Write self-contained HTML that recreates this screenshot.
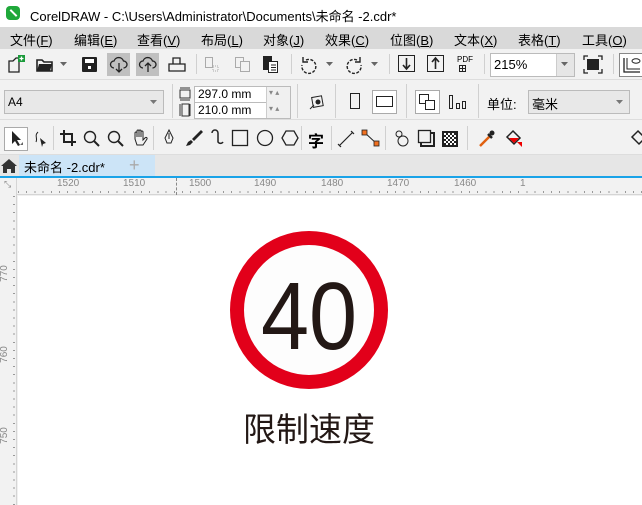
<!DOCTYPE html>
<html><head><meta charset="utf-8"><style>
*{margin:0;padding:0;box-sizing:border-box}
body{width:642px;height:505px;overflow:hidden;background:#f0f0f0;font-family:"Liberation Sans","Noto Sans CJK SC",sans-serif;position:relative;color:#000}
.a{position:absolute}
.menu span{position:absolute;top:3px;font-size:13px}
svg{position:absolute;overflow:visible}
.sep{position:absolute;width:1px;background:#d0d0d0}
.rl{position:absolute;font-size:10px;color:#888}
</style></head><body>
<div class="a" style="left:0;top:0;width:642px;height:27px;background:#fff"></div>
<div class="a" style="left:6px;top:6px;width:14px;height:14px;border-radius:4px;background:#1fa83a"></div>
<div class="a" style="left:9px;top:12px;width:9px;height:2px;background:#fff;transform:rotate(45deg)"></div>
<div class="a" style="left:30px;top:6px;font-size:13px">CorelDRAW - C:\Users\Administrator\Documents\未命名 -2.cdr*</div>
<div class="a menu" style="left:0;top:27px;width:642px;height:22px;background:#d9d9d9">
<span style="left:10px">文件(<u>F</u>)</span><span style="left:74px">编辑(<u>E</u>)</span><span style="left:137px">查看(<u>V</u>)</span><span style="left:201px">布局(<u>L</u>)</span><span style="left:263px">对象(<u>J</u>)</span><span style="left:325px">效果(<u>C</u>)</span><span style="left:390px">位图(<u>B</u>)</span><span style="left:454px">文本(<u>X</u>)</span><span style="left:518px">表格(<u>T</u>)</span><span style="left:582px">工具(<u>O</u>)</span></div>
<div class="a" style="left:0;top:49px;width:642px;height:31px;background:#f2f2f2;border-bottom:1px solid #ddd"></div>
<svg style="left:7px;top:55px" width="20" height="20"><path d="M2 6h4l3-3h3v14H2z" fill="none" stroke="#222" stroke-width="1.3"/><rect x="11" y="0" width="7" height="7" fill="#1a9a3a"/><path d="M14.5 1.5v4M12.5 3.5h4" stroke="#fff" stroke-width="1.3"/></svg>
<svg style="left:36px;top:57px" width="20" height="16"><path d="M1 3h5l2 2h8v9H1z" fill="none" stroke="#222" stroke-width="1.6"/><path d="M3 7h13l-2 7H1z" fill="#222"/></svg>
<svg style="left:60px;top:62px" width="8" height="5"><path d="M0 0h7l-3.5 4z" fill="#666"/></svg>
<svg style="left:82px;top:57px" width="16" height="16"><rect x="0" y="0" width="15" height="15" rx="1" fill="#222"/><rect x="3" y="2" width="9" height="4" fill="#fff"/><rect x="6" y="9" width="3" height="3" fill="#fff"/></svg>
<div class="a" style="left:107px;top:53px;width:23px;height:23px;background:#c0c0c0"></div>
<div class="a" style="left:136px;top:53px;width:23px;height:23px;background:#c0c0c0"></div>
<svg style="left:110px;top:56px" width="18" height="18"><path d="M4 12a3.5 3.5 0 0 1 0-7 5 5 0 0 1 9.5 0 3.5 3.5 0 0 1 0 7" fill="none" stroke="#222" stroke-width="1.3"/><path d="M9 7v9M6 13l3 3 3-3" fill="none" stroke="#222" stroke-width="1.3"/></svg>
<svg style="left:139px;top:56px" width="18" height="18"><path d="M4 12a3.5 3.5 0 0 1 0-7 5 5 0 0 1 9.5 0 3.5 3.5 0 0 1 0 7" fill="none" stroke="#222" stroke-width="1.3"/><path d="M9 16V7M6 10l3-3 3 3" fill="none" stroke="#222" stroke-width="1.3"/></svg>
<svg style="left:168px;top:56px" width="18" height="18"><path d="M5 8V2h7v6M1 8h16v7H1z" fill="none" stroke="#222" stroke-width="1.3"/></svg>
<div class="sep" style="left:196px;top:54px;height:20px"></div>
<svg style="left:205px;top:57px" width="14" height="16"><rect x="0.5" y="0.5" width="7" height="10" fill="none" stroke="#aaa"/><rect x="8" y="9" width="5" height="5" fill="none" stroke="#aaa" stroke-dasharray="1 1"/></svg>
<svg style="left:235px;top:57px" width="16" height="16"><rect x="0.5" y="0.5" width="8" height="10" fill="none" stroke="#aaa"/><rect x="5.5" y="4.5" width="9" height="10" fill="#f2f2f2" stroke="#aaa"/></svg>
<svg style="left:263px;top:56px" width="16" height="18"><rect x="0" y="0" width="9" height="14" fill="#222"/><rect x="5.5" y="5.5" width="9" height="11" fill="#fff" stroke="#222"/><path d="M8 9h5M8 11.5h5M8 14h5" stroke="#222"/></svg>
<div class="sep" style="left:291px;top:54px;height:20px"></div>
<svg style="left:300px;top:57px" width="18" height="17"><path d="M6 3a7 7 0 1 1-4 5" fill="none" stroke="#222" stroke-width="1.4" stroke-dasharray="3 1.5"/><path d="M3 0v5h5" fill="none" stroke="#222" stroke-width="1.4"/></svg>
<svg style="left:326px;top:62px" width="8" height="5"><path d="M0 0h7l-3.5 4z" fill="#666"/></svg>
<svg style="left:345px;top:57px" width="18" height="17"><path d="M12 3a7 7 0 1 0 4 5" fill="none" stroke="#222" stroke-width="1.4" stroke-dasharray="3 1.5"/><path d="M15 0v5h-5" fill="none" stroke="#222" stroke-width="1.4"/></svg>
<svg style="left:371px;top:62px" width="8" height="5"><path d="M0 0h7l-3.5 4z" fill="#666"/></svg>
<div class="sep" style="left:389px;top:54px;height:20px"></div>
<svg style="left:398px;top:55px" width="18" height="18"><rect x="0.5" y="0.5" width="16" height="16" fill="none" stroke="#222"/><path d="M8.5 3v10M5 10l3.5 4 3.5-4" fill="none" stroke="#222" stroke-width="1.6"/></svg>
<svg style="left:427px;top:55px" width="18" height="18"><rect x="0.5" y="0.5" width="16" height="16" fill="none" stroke="#222"/><path d="M8.5 14V4M5 7l3.5-4 3.5 4" fill="none" stroke="#222" stroke-width="1.6"/></svg>
<div class="a" style="left:457px;top:55px;font-size:8px">PDF</div>
<svg style="left:459px;top:65px" width="8" height="8"><rect x="0.5" y="0.5" width="6" height="6" fill="none" stroke="#222"/><path d="M3.5 0v7M0 3.5h7" stroke="#222"/></svg>
<div class="sep" style="left:484px;top:54px;height:20px"></div>
<div class="a" style="left:490px;top:53px;width:85px;height:24px;background:#fff;border:1px solid #bbb"></div>
<div class="a" style="left:494px;top:57px;font-size:13px">215%</div>
<div class="a" style="left:556px;top:54px;width:18px;height:22px;background:#e6e6e6;border-left:1px solid #ccc"></div>
<svg style="left:561px;top:62px" width="8" height="5"><path d="M0 0h7l-3.5 4z" fill="#666"/></svg>
<svg style="left:584px;top:56px" width="18" height="17"><path d="M0 4V0h4M14 0h4v4M18 13v4h-4M4 17H0v-4" fill="none" stroke="#222" stroke-width="1.3"/><rect x="3" y="3" width="12" height="11" fill="#222"/></svg>
<div class="sep" style="left:613px;top:54px;height:20px"></div>
<div class="a" style="left:619px;top:53px;width:24px;height:24px;border:1px solid #888;background:#fff"></div>
<svg style="left:623px;top:57px" width="18" height="16"><path d="M1 1v14h16" fill="none" stroke="#222" stroke-width="1.3"/><path d="M4 1v11h13" fill="none" stroke="#222"/><ellipse cx="13" cy="4" rx="4" ry="2.2" fill="none" stroke="#222"/></svg>
<div class="a" style="left:0;top:80px;width:642px;height:40px;background:#f2f2f2;border-bottom:1px solid #ddd"></div>
<div class="a" style="left:4px;top:90px;width:160px;height:24px;background:#e8e8e8;border:1px solid #bbb"></div>
<div class="a" style="left:8px;top:95px;font-size:12px">A4</div>
<svg style="left:150px;top:100px" width="8" height="5"><path d="M0 0h7l-3.5 4z" fill="#777"/></svg>
<div class="sep" style="left:172px;top:84px;height:34px"></div>
<svg style="left:179px;top:87px" width="12" height="30"><path d="M1 1h10M1 13h10M1 3h10v8H1z" fill="none" stroke="#333"/><path d="M1 17v12M11 17v12M3 17h7v12H3z" fill="none" stroke="#333"/></svg>
<div class="a" style="left:194px;top:86px;width:97px;height:17px;background:#fff;border:1px solid #bbb"></div>
<div class="a" style="left:194px;top:102px;width:97px;height:17px;background:#fff;border:1px solid #bbb"></div>
<div class="a" style="left:198px;top:87px;font-size:12px">297.0 mm</div>
<div class="a" style="left:198px;top:103px;font-size:12px">210.0 mm</div>
<div class="a" style="left:266px;top:87px;width:24px;height:31px;background:#f0f0f0;border-left:1px solid #ccc"></div>
<div class="a" style="left:269px;top:88px;font-size:8px;color:#888">▾ ▴</div>
<div class="a" style="left:269px;top:104px;font-size:8px;color:#888">▾ ▴</div>
<div class="sep" style="left:297px;top:84px;height:34px"></div>
<svg style="left:309px;top:93px" width="18" height="18"><rect x="3.5" y="3.5" width="10" height="10" fill="none" stroke="#222" transform="rotate(-10 9 9)"/><circle cx="9" cy="9" r="2.5" fill="#222"/><path d="M1 16l4-4" stroke="#222"/></svg>
<div class="sep" style="left:335px;top:84px;height:34px"></div>
<svg style="left:350px;top:93px" width="10" height="17"><rect x="0.5" y="0.5" width="9" height="15" fill="none" stroke="#222"/></svg>
<div class="a" style="left:372px;top:90px;width:25px;height:24px;border:1px solid #aaa;background:#fff"></div>
<svg style="left:376px;top:96px" width="18" height="12"><rect x="0.5" y="0.5" width="16" height="10" fill="none" stroke="#222"/></svg>
<div class="sep" style="left:406px;top:84px;height:34px"></div>
<div class="a" style="left:415px;top:90px;width:25px;height:24px;border:1px solid #aaa;background:#fff"></div>
<svg style="left:419px;top:94px" width="18" height="16"><rect x="0.5" y="0.5" width="9" height="9" fill="none" stroke="#222"/><rect x="6.5" y="6.5" width="9" height="9" fill="#fff" stroke="#222"/></svg>
<svg style="left:449px;top:95px" width="18" height="14"><rect x="0.5" y="0.5" width="3" height="13" fill="none" stroke="#222"/><rect x="7.5" y="8.5" width="3" height="5" fill="none" stroke="#222"/><rect x="13.5" y="6.5" width="3" height="7" fill="none" stroke="#222"/></svg>
<div class="sep" style="left:478px;top:84px;height:34px"></div>
<div class="a" style="left:487px;top:94px;font-size:13px">单位:</div>
<div class="a" style="left:528px;top:90px;width:102px;height:24px;background:#e8e8e8;border:1px solid #bbb"></div>
<div class="a" style="left:532px;top:94px;font-size:13px">毫米</div>
<svg style="left:616px;top:100px" width="8" height="5"><path d="M0 0h7l-3.5 4z" fill="#777"/></svg>
<div class="a" style="left:0;top:120px;width:642px;height:35px;background:#f2f2f2;border-bottom:1px solid #ddd"></div>
<div class="a" style="left:4px;top:127px;width:24px;height:24px;border:1px solid #aaa;background:#fff"></div>
<svg style="left:10px;top:130px" width="14" height="18"><path d="M2 1v13l3-3 3 5 2-1-3-5h4z" fill="#222"/><path d="M10 15l3 0 0-3z" fill="#666"/></svg>
<svg style="left:33px;top:130px" width="16" height="18"><path d="M5 2c-4 4 0 6-2 10" fill="none" stroke="#222"/><path d="M7 8l6 5-3 1 -1 3z" fill="#222"/></svg>
<div class="sep" style="left:53px;top:126px;height:24px"></div>
<svg style="left:60px;top:130px" width="16" height="18"><path d="M4 0v12h12M0 4h12v12" fill="none" stroke="#222" stroke-width="2"/></svg>
<svg style="left:83px;top:130px" width="18" height="18"><circle cx="7" cy="7" r="5.5" fill="none" stroke="#222" stroke-width="1.4"/><path d="M11 11l5 5" stroke="#222" stroke-width="2"/></svg>
<svg style="left:107px;top:130px" width="18" height="18"><circle cx="7" cy="7" r="5.5" fill="none" stroke="#222" stroke-width="1.4"/><path d="M11 11l5 5" stroke="#222" stroke-width="2"/></svg>
<svg style="left:131px;top:129px" width="18" height="18"><path d="M4 10V4a1 1 0 0 1 2 0v4V2a1 1 0 0 1 2 0v6V2a1 1 0 0 1 2 0v6V3a1 1 0 0 1 2 0v8l2-2a1 1 0 0 1 2 1l-4 6H6z" fill="none" stroke="#222"/></svg>
<div class="sep" style="left:153px;top:126px;height:24px"></div>
<svg style="left:163px;top:129px" width="12" height="18"><path d="M6 1l4 8-2 5H4l-2-5z" fill="none" stroke="#222"/><path d="M6 4v6" stroke="#222"/></svg>
<svg style="left:185px;top:129px" width="18" height="18"><path d="M16 1L7 10l2 2 9-9zM6 11l-3 2-2 4 4-1 3-3z" fill="#222"/></svg>
<svg style="left:208px;top:129px" width="16" height="18"><path d="M4 4a3 3 0 0 1 6 0v9a3 3 0 0 0 5 0" fill="none" stroke="#222" stroke-width="1.5"/></svg>
<svg style="left:232px;top:130px" width="18" height="18"><rect x="0.5" y="0.5" width="15" height="15" fill="none" stroke="#222" stroke-width="1.3"/></svg>
<svg style="left:257px;top:130px" width="18" height="18"><circle cx="8" cy="8" r="7.5" fill="none" stroke="#222" stroke-width="1.3"/></svg>
<svg style="left:282px;top:130px" width="18" height="18"><path d="M4 1h8l4 7-4 7H4L0 8z" fill="none" stroke="#222" stroke-width="1.3"/></svg>
<div class="sep" style="left:301px;top:126px;height:24px"></div>
<div class="a" style="left:308px;top:128px;font-size:16px;font-weight:bold">字</div>
<div class="sep" style="left:331px;top:126px;height:24px"></div>
<svg style="left:338px;top:130px" width="18" height="18"><path d="M1 16L15 2M0 14l3 3M13 1l3 3" stroke="#222" stroke-width="1.2"/></svg>
<svg style="left:362px;top:130px" width="18" height="18"><path d="M2 2l13 12" stroke="#222"/><rect x="0" y="0" width="5" height="5" fill="#f07020" stroke="#222" stroke-width="0.8"/><rect x="12" y="11" width="5" height="5" fill="#f07020" stroke="#222" stroke-width="0.8"/></svg>
<div class="sep" style="left:385px;top:126px;height:24px"></div>
<svg style="left:394px;top:130px" width="18" height="18"><circle cx="5" cy="4" r="3" fill="none" stroke="#222"/><circle cx="9" cy="11" r="5" fill="none" stroke="#222"/></svg>
<svg style="left:418px;top:130px" width="18" height="18"><rect x="0.5" y="0.5" width="12" height="12" fill="none" stroke="#222" stroke-width="1.3"/><path d="M13 3h3v13H3v-3" fill="none" stroke="#222" stroke-width="2"/></svg>
<svg style="left:442px;top:131px" width="16" height="16"><rect width="16" height="16" fill="#222"/><path d="M2 2h2v2H2zM6 2h2v2H6zM10 2h2v2h-2zM4 4h2v2H4zM8 4h2v2H8zM12 4h2v2h-2zM2 6h2v2H2zM6 6h2v2H6zM10 6h2v2h-2zM4 8h2v2H4zM8 8h2v2H8zM12 8h2v2h-2zM2 10h2v2H2zM6 10h2v2H6zM10 10h2v2h-2zM4 12h2v2H4zM8 12h2v2H8zM12 12h2v2h-2z" fill="#fff"/></svg>
<div class="sep" style="left:467px;top:126px;height:24px"></div>
<svg style="left:478px;top:130px" width="18" height="18"><path d="M2 16l10-10" stroke="#e06010" stroke-width="2.5"/><path d="M10 4l4 4" stroke="#222" stroke-width="2.5"/><circle cx="14" cy="3" r="2.5" fill="#222"/></svg>
<svg style="left:505px;top:130px" width="18" height="18"><path d="M8 1l7 7-6 6-7-7z" fill="none" stroke="#222" stroke-width="1.5"/><path d="M4 8h10l-5 5z" fill="#e00"/><path d="M12 12h5v5z" fill="#e00"/></svg>
<svg style="left:630px;top:130px" width="18" height="18"><path d="M8 1l7 7-6 6-7-7z" fill="none" stroke="#222" stroke-width="1.5"/></svg>
<div class="a" style="left:0;top:155px;width:642px;height:21px;background:#e6e6e6"></div>
<svg style="left:1px;top:158px" width="16" height="16"><path d="M8 1L0 8h2v7h4v-4h4v4h4V8h2z" fill="#333"/></svg>
<div class="a" style="left:19px;top:155px;width:136px;height:21px;background:#cce4f7"></div>
<div class="a" style="left:24px;top:157px;font-size:13px">未命名 -2.cdr*</div>
<div class="a" style="left:129px;top:155px;font-size:18px;color:#aaa;line-height:20px">+</div>
<div class="a" style="left:0;top:176px;width:642px;height:2px;background:#1aa3e8"></div>
<div class="a" style="left:0;top:178px;width:642px;height:17px;background:#f2f2f2;border-bottom:1px solid #d5d5d5"></div>
<div class="a" style="left:0;top:178px;width:17px;height:327px;background:#f2f2f2;border-right:1px solid #d5d5d5"></div>
<div class="rl" style="left:4px;top:179px;font-size:9px">⤡</div>
<div class="rl" style="left:57px;top:178px">1520</div><div class="rl" style="left:123px;top:178px">1510</div><div class="rl" style="left:189px;top:178px">1500</div><div class="rl" style="left:254px;top:178px">1490</div><div class="rl" style="left:321px;top:178px">1480</div><div class="rl" style="left:387px;top:178px">1470</div><div class="rl" style="left:454px;top:178px">1460</div><div class="rl" style="left:520px;top:178px">1</div>
<div class="a" style="left:18px;top:191px;width:624px;height:2px;background:repeating-linear-gradient(90deg,#999 0 1px,transparent 1px 8.2px)"></div>
<div class="a" style="left:176px;top:178px;height:17px;border-left:1px dashed #888"></div>
<div class="a" style="left:13px;top:196px;width:2px;height:309px;background:repeating-linear-gradient(180deg,#999 0 1px,transparent 1px 8.1px)"></div>
<div class="rl" style="left:-4px;top:268px;transform:rotate(-90deg)">770</div>
<div class="rl" style="left:-4px;top:349px;transform:rotate(-90deg)">760</div>
<div class="rl" style="left:-4px;top:430px;transform:rotate(-90deg)">750</div>
<div class="a" style="left:18px;top:196px;width:624px;height:309px;background:#fff"></div>
<div class="a" style="left:230px;top:231px;width:158px;height:158px;border-radius:50%;border:14px solid #e2001a;background:#fdfdfd"></div>
<div class="a" style="left:230px;top:269px;width:158px;text-align:center;font-size:96px;line-height:96px;color:#231815;transform:scaleX(0.9)">40</div>
<div class="a" style="left:230px;top:403px;width:158px;text-align:center;font-size:33px;color:#231815;font-family:'Noto Sans CJK SC',sans-serif">限制速度</div>
</body></html>
